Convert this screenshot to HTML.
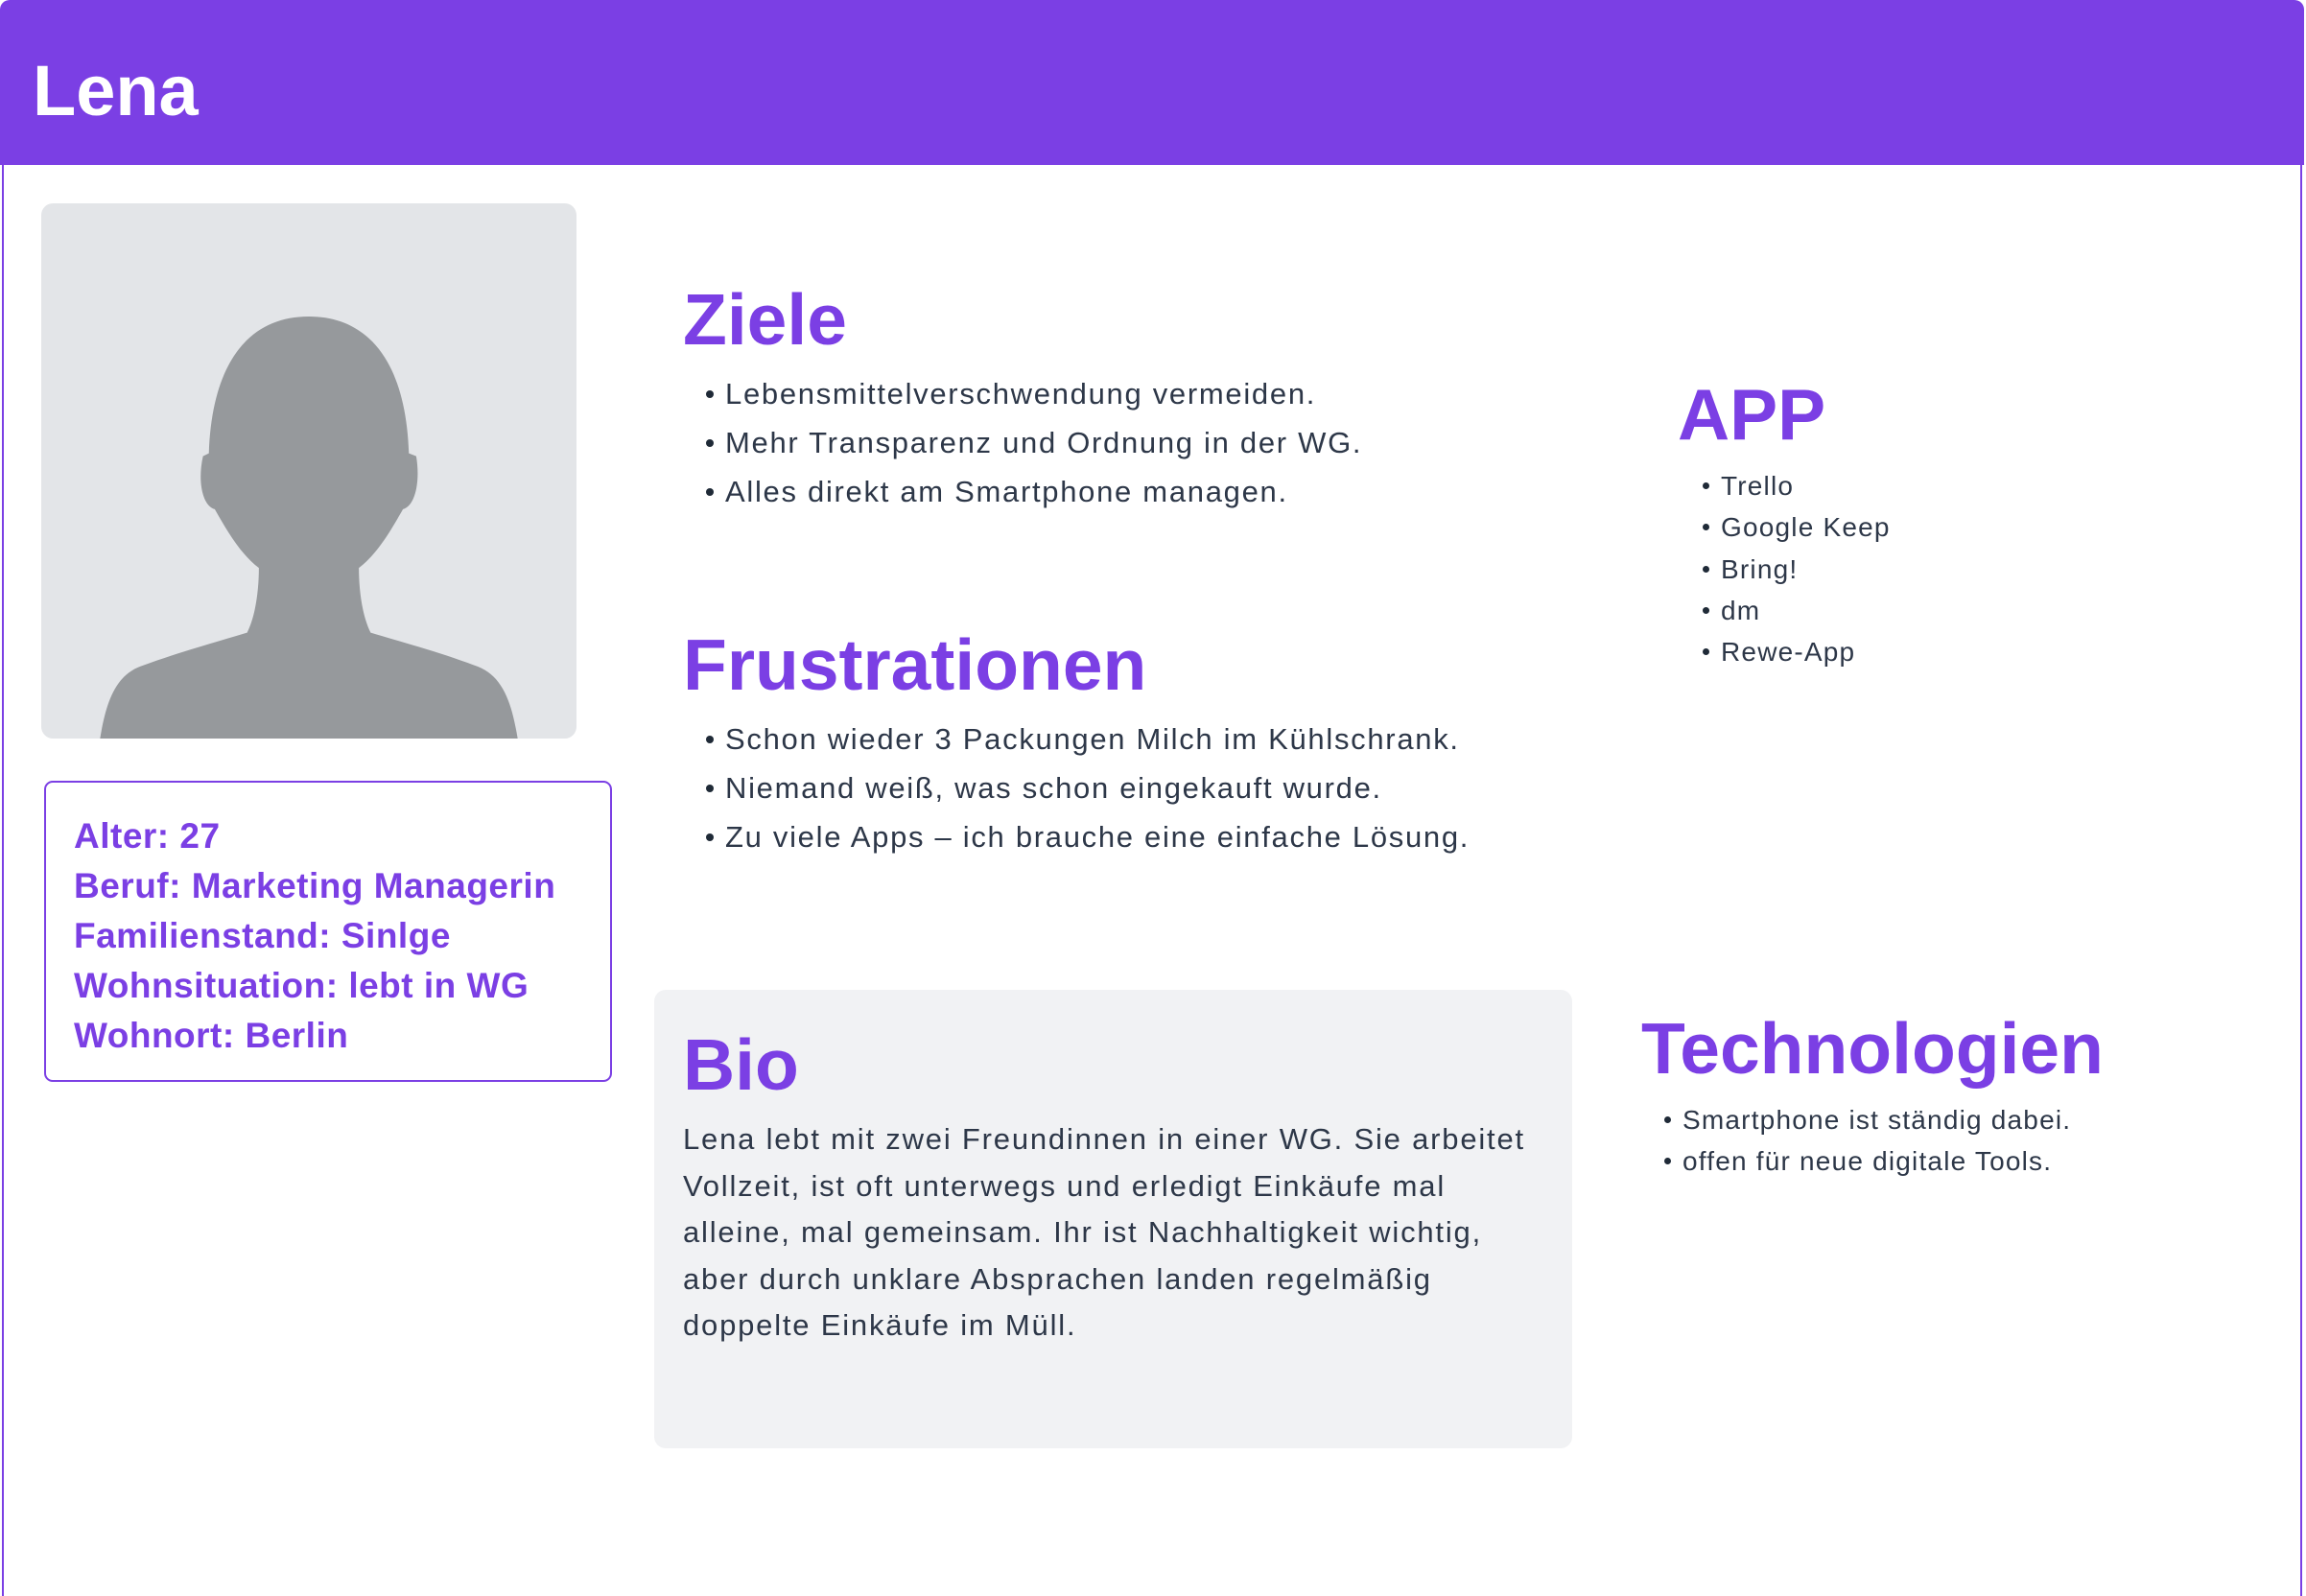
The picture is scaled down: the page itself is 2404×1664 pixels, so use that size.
<!DOCTYPE html>
<html><head><meta charset="utf-8"><style>
*{margin:0;padding:0;box-sizing:border-box}
html,body{width:2404px;height:1664px;background:#fff;overflow:hidden;font-family:"Liberation Sans",sans-serif}
.frame{position:absolute;left:2px;top:2px;width:2398px;height:1662px;border:2px solid #7b3fe4;border-bottom:none;border-radius:10px 10px 0 0}
.hdr{position:absolute;left:0;top:0;width:2402px;height:172px;background:#7b3fe4;border-radius:10px 10px 0 0}
.a{position:absolute;white-space:nowrap}
.name{left:34px;top:56px;font-size:74px;line-height:77px;font-weight:bold;color:#fff}
.h{font-size:75px;line-height:77px;font-weight:bold;color:#7b3fe4}
.b{font-size:31px;color:#2d3748;letter-spacing:1.7px}
.b div{height:51px;line-height:51px;position:relative}
.b div:before{content:"";position:absolute;left:-20px;top:22px;width:8px;height:8px;border-radius:50%;background:#1f2a37}
.s{font-size:28px;color:#2d3748;letter-spacing:1.2px}
.s div{height:43.3px;line-height:43px;position:relative}
.s div:before{content:"";position:absolute;left:-19px;top:18px;width:7px;height:7px;border-radius:50%;background:#1f2a37}
.info{left:46px;top:814px;width:592px;height:314px;border:2px solid #7b3fe4;border-radius:9px}
.it{left:77px;top:846px;font-size:37px;line-height:52px;font-weight:bold;color:#7b3fe4;letter-spacing:0.5px}
.bio{left:682px;top:1032px;width:957px;height:478px;background:#f1f2f4;border-radius:12px}
.p{left:712px;top:1164px;font-size:31px;line-height:48.6px;color:#2d3748;letter-spacing:1.8px}
</style></head><body>
<div class="frame"></div>
<div class="hdr"></div>
<div class="a name">Lena</div>

<svg class="a" style="left:43px;top:212px" width="558" height="558" viewBox="0 0 364 364">
<rect width="364" height="364" rx="8" fill="#e3e5e8"/>
<path fill="#96999c" d="M40 364 C44 340 50 320 70 314 C95 305 120 298 140 292 C146 280 148 262 148 248 C135 238 126 222 118 208 C110 206 106 190 110 172 L114 170 C116 110 140 77 182 77 C224 77 248 110 250 170 L255 172 C258 190 254 206 246 208 C238 222 229 238 216 248 C216 262 218 280 224 292 C244 298 270 305 294 314 C314 320 320 340 324 364 Z"/>
</svg>

<div class="a info"></div>
<div class="a it">Alter: 27<br>Beruf: Marketing Managerin<br>Familienstand: Sinlge<br>Wohnsituation: lebt in WG<br>Wohnort: Berlin</div>

<div class="a h" style="left:712px;top:295px">Ziele</div>
<div class="a b" style="left:756px;top:385px">
<div>Lebensmittelverschwendung vermeiden.</div>
<div>Mehr Transparenz und Ordnung in der WG.</div>
<div>Alles direkt am Smartphone managen.</div>
</div>

<div class="a h" style="left:712px;top:655px">Frustrationen</div>
<div class="a b" style="left:756px;top:745px">
<div>Schon wieder 3 Packungen Milch im Kühlschrank.</div>
<div>Niemand weiß, was schon eingekauft wurde.</div>
<div>Zu viele Apps – ich brauche eine einfache Lösung.</div>
</div>

<div class="a h" style="left:1749px;top:394px">APP</div>
<div class="a s" style="left:1794px;top:485px">
<div>Trello</div><div>Google Keep</div><div>Bring!</div><div>dm</div><div>Rewe-App</div>
</div>

<div class="a bio"></div>
<div class="a h" style="left:712px;top:1072px">Bio</div>
<div class="a p">Lena lebt mit zwei Freundinnen in einer WG. Sie arbeitet<br>Vollzeit, ist oft unterwegs und erledigt Einkäufe mal<br>alleine, mal gemeinsam. Ihr ist Nachhaltigkeit wichtig,<br>aber durch unklare Absprachen landen regelmäßig<br>doppelte Einkäufe im Müll.</div>

<div class="a h" style="left:1711px;top:1055px">Technologien</div>
<div class="a s" style="left:1754px;top:1146px">
<div>Smartphone ist ständig dabei.</div><div>offen für neue digitale Tools.</div>
</div>
</body></html>
